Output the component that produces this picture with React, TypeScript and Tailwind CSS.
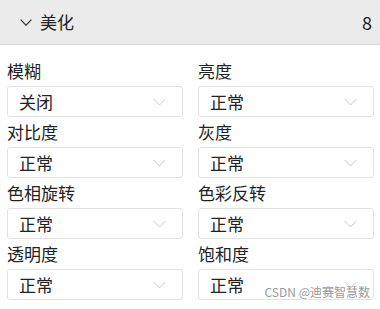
import React from "react";

type Field = { label: string; value: string };

const fields: Field[] = [
  { label: "模糊", value: "关闭" },
  { label: "亮度", value: "正常" },
  { label: "对比度", value: "正常" },
  { label: "灰度", value: "正常" },
  { label: "色相旋转", value: "正常" },
  { label: "色彩反转", value: "正常" },
  { label: "透明度", value: "正常" },
  { label: "饱和度", value: "正常" },
];

const Chevron: React.FC<{ className?: string; stroke?: number }> = ({ className, stroke = 1 }) => (
  <svg viewBox="0 0 14 8" className={className} fill="none">
    <path d="M0.7 0.7 L7 7.2 L13.3 0.7" stroke="currentColor" strokeWidth={stroke} />
  </svg>
);

const SelectBox: React.FC<Field> = ({ label, value }) => (
  <div className="flex flex-col">
    <div className="h-[30px] leading-[30px] text-[17px] text-[#222]">{label}</div>
    <div className="h-[31px] flex items-center justify-between pl-[11px] pr-[16px] border border-[#e2e2e2] rounded-[3px] bg-white">
      <span className="text-[17px] text-[#222]">{value}</span>
      <Chevron className="w-[13px] h-[8px] text-[#c4c4c4]" />
    </div>
  </div>
);

const App: React.FC = () => {
  return (
    <div
      className="relative w-[380px] h-[309px] bg-white overflow-hidden"
      style={{ fontFamily: '"Noto Sans CJK SC", "Noto Sans", sans-serif' }}
    >
      <div className="h-[45px] flex items-center justify-between bg-[#ebebeb] border-b border-[#d6d6d6] pl-[20px] pr-[8px]">
        <div className="flex items-center gap-[8px]">
          <Chevron className="w-[12px] h-[7px] text-[#333]" stroke={1.4} />
          <span className="text-[17px] text-[#222]">美化</span>
        </div>
        <span className="text-[18px] text-[#222]">8</span>
      </div>

      <div className="grid grid-cols-2 gap-x-[15px] pl-[7px] pr-[6px] pt-[11px]">
        {fields.map((f) => (
          <SelectBox key={f.label} label={f.label} value={f.value} />
        ))}
      </div>

      <div className="absolute right-[10px] bottom-[8px] text-[12px] text-[#9a9a9a]">
        CSDN @迪赛智慧数
      </div>
    </div>
  );
};

export default App;
